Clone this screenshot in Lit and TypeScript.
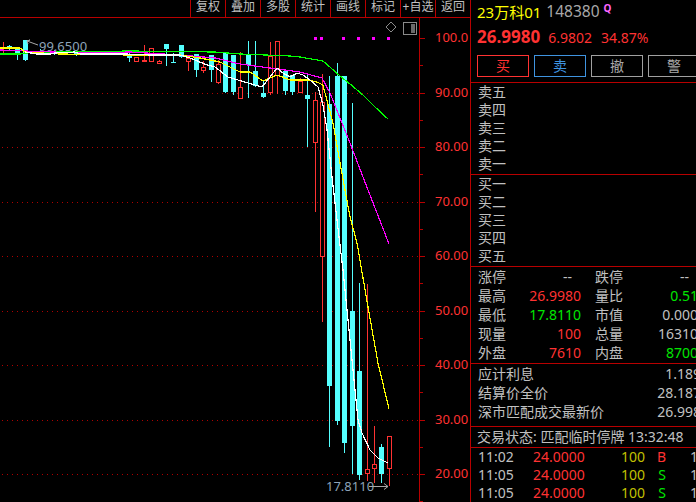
import { LitElement, css, html, svg } from "lit";
import { customElement } from "lit/decorators.js";

// x, wick top, body top, body bottom, wick bottom, rising (hollow red) or falling (cyan)
type Candle = [number, number, number, number, number, boolean];

const candles: Candle[] = [
  [1, 42, 47, 49, 54, true],
  [7, 45, 46, 49, 50, false],
  [15, 49, 49, 54, 60, false],
  [23, 40, 40, 60, 61, false],
  [38, 49, 53, 55, 55, false],
  [52, 50, 52, 54, 55, false],
  [74, 53, 53, 55, 56, false],
  [82, 52, 53, 54, 55, true],
  [97, 52, 53, 54, 55, true],
  [127, 50, 55, 58, 62, false],
  [134, 57, 57, 62, 62, true],
  [142, 45, 60, 61, 62, true],
  [149, 48, 48, 62, 62, true],
  [157, 60, 61, 64, 64, true],
  [164, 44, 44, 49, 66, false],
  [171, 53, 62, 63, 63, false],
  [179, 45, 45, 57, 58, false],
  [186, 58, 58, 62, 71, true],
  [194, 54, 54, 70, 77, false],
  [201, 61, 67, 71, 73, true],
  [209, 55, 55, 70, 82, false],
  [216, 60, 64, 83, 84, true],
  [223, 53, 53, 92, 93, false],
  [231, 55, 55, 92, 95, false],
  [238, 52, 87, 99, 99, true],
  [246, 41, 54, 65, 98, false],
  [253, 41, 71, 86, 87, false],
  [261, 81, 93, 97, 98, false],
  [268, 42, 56, 93, 95, true],
  [275, 41, 41, 76, 94, true],
  [283, 71, 71, 91, 95, false],
  [290, 75, 75, 92, 95, false],
  [298, 78, 81, 93, 93, true],
  [305, 75, 95, 99, 147, false],
  [313, 92, 100, 143, 212, true],
  [320, 74, 102, 257, 322, true],
  [327, 76, 104, 386, 447, false],
  [335, 63, 76, 421, 425, false],
  [342, 76, 76, 443, 453, false],
  [350, 103, 311, 426, 474, false],
  [357, 283, 371, 475, 480, false],
  [365, 284, 469, 474, 481, true],
  [372, 426, 464, 469, 483, true],
  [379, 444, 447, 474, 483, false],
  [387, 436, 436, 469, 486, true],
];

const lines: [string, string][] = [
  ["#00ff00", "0,54 20,54 25,53 60,52 130,51 215,52 240,54 290,56 300,57 323,61 331,68 340,76 350,84 363,95 375,107 388,119"],
  ["#ff00ff", "0,50 25,51 80,53 130,52 180,55 215,58 240,64 270,68 300,72 322,78 330,93 350,143 363,177 377,213 389,244"],
  ["#ffff00", "0,48 20,48 25,52 60,54 130,55 180,55 200,58 220,62 230,67 240,72 250,72 263,81 277,75 290,80 307,80 317,82 323,85 325,93 333,123 340,163 350,217 357,243 368,307 378,363 389,409"],
  ["#ffffff", "25,52 37,54 50,54 55,53 75,52 80,54 125,54 150,55 180,55 190,58 207,65 215,67 228,77 238,80 248,83 262,87 270,77 277,68 283,73 290,77 297,73 303,75 310,80 318,87 323,105 327,130 332,177 337,220 343,270 348,320 353,370 358,420 362,433 370,450 378,458 388,463"],
];

const gridYs = [93, 147, 202, 256, 311, 365, 420, 474];
const priceLabels: [string, number][] = [
  ["100.0", 38], ["90.00", 93], ["80.00", 147], ["70.00", 202], ["60.00", 256],
  ["50.00", 311], ["40.00", 365], ["30.00", 420], ["20.00", 474],
];
const markers = [314, 320, 342, 357, 372, 387];
const tools = ["复权", "叠加", "多股", "统计", "画线", "标记", "+自选", "返回"];

const stats = [
  ["涨停", "--", "dash", "跌停", "--", "dash"],
  ["最高", "26.9980", "red", "量比", "0.51", "green"],
  ["最低", "17.8110", "green", "市值", "0.000", ""],
  ["现量", "100", "red", "总量", "16310", ""],
  ["外盘", "7610", "red", "内盘", "8700", "green"],
];
const extras = [
  ["应计利息", "1.189"],
  ["结算价全价", "28.187"],
  ["深市匹配成交最新价", "26.998"],
];
const ticks = [
  ["11:02", "B", "red"],
  ["11:05", "S", "green"],
  ["11:05", "S", "green"],
];

@customElement("app-root")
class AppRoot extends LitElement {
  static styles = css`
    :host {
      display: flex;
      width: 696px;
      height: 502px;
      overflow: hidden;
      background: #000;
      color: #c0c0c0;
      font-family: "Noto Sans", "Noto Sans CJK SC", sans-serif;
      font-size: 14px;
    }
    .left {
      width: 470px;
      flex: none;
      display: flex;
      flex-direction: column;
    }
    .toolbar {
      height: 17px;
      flex: none;
      display: flex;
      justify-content: flex-end;
      border-bottom: 1px solid #b80000;
    }
    .tool {
      width: 35px;
      box-sizing: border-box;
      border-left: 1px solid #b80000;
      text-align: center;
      font-size: 12px;
      line-height: 13px;
      white-space: nowrap;
    }
    .chart {
      display: block;
      width: 470px;
      height: 484px;
    }
    .chart .sharp {
      shape-rendering: crispEdges;
    }
    .ma {
      fill: none;
      stroke-width: 1.2;
    }
    .price {
      fill: #ff3232;
      font-size: 13px;
      dominant-baseline: central;
    }
    .note {
      fill: #8ea4b8;
      font-size: 13px;
      dominant-baseline: central;
    }
    .panel {
      flex: 1;
      min-width: 0;
      border-left: 1px solid #b80000;
      overflow: hidden;
    }
    .section {
      box-sizing: border-box;
      border-bottom: 1px solid #b80000;
      padding-left: 7px;
      width: 225px;
    }
    .head {
      height: 83px;
      padding-top: 1px;
    }
    .title {
      display: flex;
      align-items: center;
      height: 20px;
      white-space: nowrap;
    }
    .name {
      color: #ffff00;
      font-size: 15px;
      margin-left: -1px;
    }
    .code {
      margin-left: 5px;
      font-size: 15.5px;
      color: #a8a8a8;
    }
    .q {
      margin: -6px 0 0 4px;
      color: #ff66ff;
      font-size: 10px;
      font-weight: 700;
    }
    .quote {
      display: flex;
      align-items: baseline;
      margin-top: 4px;
      height: 22px;
      color: #ff3232;
      font-size: 14px;
      white-space: nowrap;
    }
    .last {
      font-size: 17px;
      font-weight: 700;
      margin: 0 8px 0 -1px;
    }
    .pct {
      margin-left: 9px;
    }
    .actions {
      display: flex;
      gap: 5px;
      margin: 8px 0 0 -1px;
      width: 240px;
    }
    .btn {
      width: 52px;
      height: 22px;
      flex: none;
      box-sizing: border-box;
      border: 1px solid #a0a0a0;
      text-align: center;
      line-height: 20px;
      font-size: 14px;
      color: #a8a8a8;
    }
    .btn.buy {
      border-color: #ff3232;
      color: #ff3232;
    }
    .btn.sell {
      border-color: #3f94e0;
      color: #3f94e0;
    }
    .book {
      height: 92px;
    }
    .book div {
      height: 18px;
      line-height: 18px;
    }
    .stats {
      height: 97px;
      display: grid;
      grid-template-columns: 35px 68px 14px 35px 68px;
      grid-auto-rows: 19px;
      line-height: 19px;
      white-space: nowrap;
    }
    .num {
      text-align: right;
    }
    .dash {
      padding-right: 9px;
    }
    .red {
      color: #ff3232;
    }
    .green {
      color: #00e600;
    }
    .extra {
      height: 63px;
    }
    .extra div {
      display: flex;
      justify-content: space-between;
      height: 19px;
      line-height: 19px;
      width: 223px;
    }
    .status {
      height: 21px;
      line-height: 19px;
      white-space: nowrap;
      padding-left: 6px;
    }
    .tape {
      padding-left: 7px;
      width: 225px;
    }
    .tick {
      display: grid;
      grid-template-columns: 55px 51px 61px 21px 32px;
      height: 18px;
      line-height: 18px;
    }
    .vol {
      color: #c0c000;
    }
  `;

  private renderCandle([x, wickTop, top, bottom, wickBottom, up]: Candle) {
    const color = up ? "#ff3232" : "#55ffff";
    const wick = svg`<rect x=${x + 2} y=${wickTop} width="1" height=${wickBottom - wickTop} fill=${color}></rect>`;
    const body = up
      ? svg`<rect x=${x + 0.5} y=${top + 0.5} width="4" height=${Math.max(bottom - top - 1, 1)} fill="#000" stroke=${color}></rect>`
      : svg`<rect x=${x} y=${top} width="5" height=${Math.max(bottom - top, 1)} fill=${color}></rect>`;
    return svg`${wick}${body}`;
  }

  private renderChart() {
    return html`
      <svg class="chart" viewBox="0 18 470 484">
        <g class="sharp">
          ${gridYs.map(
            (y) => svg`<line x1="2" x2="419" y1=${y + 0.5} y2=${y + 0.5} stroke="#b00000" stroke-dasharray="1 4"></line>`
          )}
          <line x1="419.5" x2="419.5" y1="18" y2="502" stroke="#b80000"></line>
          ${priceLabels.map(
            ([, y]) => svg`<line x1="420" x2="425" y1=${y + 0.5} y2=${y + 0.5} stroke="#b80000"></line>
              <line x1="420" x2="423" y1=${y + 27.5} y2=${y + 27.5} stroke="#b80000"></line>`
          )}
          ${candles.map((c) => this.renderCandle(c))}
          ${markers.map((x) => svg`<rect x=${x} y="37" width="3" height="3" fill="#ff00ff"></rect>`)}
        </g>

        ${priceLabels.map(([t, y]) => svg`<text class="price" x="435" y=${y - 1}>${t}</text>`)}
        <text class="note" x="39" y="46">99.6500</text>
        <polyline points="38,45 27,41 30,40 27,41 28,44" fill="none" stroke="#a8a8a8"></polyline>

        <g class="sharp">
          ${lines.map(([color, pts]) => svg`<polyline class="ma" points=${pts} stroke=${color}></polyline>`)}
        </g>

        <text class="note" x="326" y="486">17.8110</text>
        <line x1="369" x2="388" y1="486.5" y2="486.5" stroke="#a8a8a8"></line>
        <polyline points="384,483.5 388,486.5 384,489.5" fill="none" stroke="#a8a8a8"></polyline>

        <polygon points="391,22 396,27 391,32 386,27" fill="none" stroke="#8a8a8a"></polygon>
        <rect x="403.5" y="22.5" width="13" height="12" fill="#000" stroke="#8a8a8a"></rect>
        <rect x="411" y="24" width="4" height="9" fill="#6a6a6a"></rect>
      </svg>
    `;
  }

  render() {
    return html`
      <div class="left">
        <div class="toolbar">${tools.map((t) => html`<div class="tool">${t}</div>`)}</div>
        ${this.renderChart()}
      </div>
      <div class="panel">
        <div class="section head">
          <div class="title">
            <span class="name">23万科01</span><span class="code">148380</span><span class="q">Q</span>
          </div>
          <div class="quote">
            <span class="last">26.9980</span><span>6.9802</span><span class="pct">34.87%</span>
          </div>
          <div class="actions">
            <div class="btn buy">买</div>
            <div class="btn sell">卖</div>
            <div class="btn">撤</div>
            <div class="btn">警</div>
          </div>
        </div>
        <div class="section book">
          ${["卖五", "卖四", "卖三", "卖二", "卖一"].map((t) => html`<div>${t}</div>`)}
        </div>
        <div class="section book">
          ${["买一", "买二", "买三", "买四", "买五"].map((t) => html`<div>${t}</div>`)}
        </div>
        <div class="section stats">
          ${stats.map(
            ([a, av, ac, b, bv, bc]) => html`
              <span>${a}</span><span class="num ${ac}">${av}</span><span></span>
              <span>${b}</span><span class="num ${bc}">${bv}</span>
            `
          )}
        </div>
        <div class="section extra">
          ${extras.map(([k, v]) => html`<div><span>${k}</span><span>${v}</span></div>`)}
        </div>
        <div class="section status">交易状态: 匹配临时停牌 13:32:48</div>
        <div class="tape">
          ${ticks.map(
            ([time, side, color]) => html`
              <div class="tick">
                <span>${time}</span><span class="red">24.0000</span>
                <span class="num vol">100</span>
                <span class="num ${color}">${side}</span>
                <span class="num">1</span>
              </div>
            `
          )}
        </div>
      </div>
    `;
  }
}
